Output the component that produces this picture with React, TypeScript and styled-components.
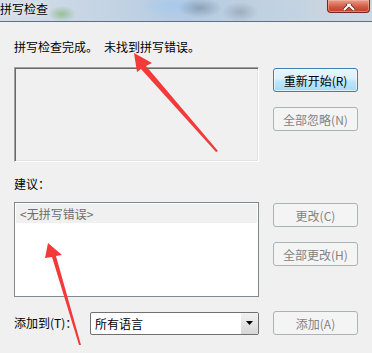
import styled, { createGlobalStyle } from 'styled-components'

const GlobalStyle = createGlobalStyle`
  html, body {
    margin: 0;
    padding: 0;
    background: #f0f0f0;
  }
  body {
    font-family: 'Noto Sans CJK SC', 'Microsoft YaHei', sans-serif;
    font-size: 12px;
    color: #000;
  }
`

const Window = styled.div`
  position: relative;
  width: 372px;
  height: 353px;
  overflow: hidden;
  background: #f0f0f0;
`

const TitleBar = styled.div`
  display: flex;
  justify-content: space-between;
  align-items: flex-start;
  height: 21px;
  border-bottom: 1px solid #5f7082;
  background:
    radial-gradient(ellipse 14px 8px at 62px 14px, rgba(110, 170, 90, 0.55), transparent),
    radial-gradient(ellipse 22px 10px at 200px 8px, rgba(90, 110, 130, 0.45), transparent),
    radial-gradient(ellipse 18px 10px at 240px 12px, rgba(110, 125, 140, 0.4), transparent),
    radial-gradient(ellipse 30px 12px at 170px 6px, rgba(160, 200, 240, 0.7), transparent),
    radial-gradient(ellipse 40px 14px at 280px 10px, rgba(190, 210, 230, 0.6), transparent),
    linear-gradient(90deg, #d5dee8 0%, #c3d3e3 30%, #b4cbe3 50%, #c4d2df 75%, #cdd8e2 100%);
`

const TitleText = styled.div`
  padding-top: 2px;
  font-size: 12px;
  line-height: 14px;
  color: #000;
  text-shadow: 0 0 6px rgba(255, 255, 255, 0.9);
`

const CloseButton = styled.div`
  display: flex;
  align-items: flex-end;
  justify-content: center;
  width: 41px;
  height: 12px;
  margin-right: 2px;
  border: 1px solid #6e2a20;
  border-top: none;
  border-radius: 0 0 4px 4px;
  background: linear-gradient(#e8a08f, #d0553f 60%, #c0402a);
  box-shadow: inset 0 0 0 1px rgba(255, 190, 170, 0.5);
`

const Content = styled.div`
  padding: 17px 0 0 14px;
`

const Message = styled.div`
  display: flex;
  gap: 6px;
  line-height: 16px;
  height: 16px;
`

const Row = styled.div<{ $mt: number }>`
  display: flex;
  gap: 14px;
  margin-top: ${(p) => p.$mt}px;
`

const SunkenBox = styled.div`
  box-sizing: border-box;
  width: 245px;
  height: 95px;
  border-top: 1px solid #a0a0a0;
  border-left: 1px solid #a0a0a0;
  border-right: 1px solid #fff;
  border-bottom: 1px solid #fff;
  box-shadow: inset 1px 1px 0 #696969, inset -1px -1px 0 #e3e3e3;
  background: #f0f0f0;
`

const ListBox = styled.div`
  box-sizing: border-box;
  width: 245px;
  height: 95px;
  border: 1px solid #828790;
  background: #fff;
  padding: 1px;
`

const ListItem = styled.div`
  height: 19px;
  line-height: 19px;
  padding-left: 4px;
  background: #f0f0f0;
  color: #6d6d6d;
`

const ButtonColumn = styled.div`
  display: flex;
  flex-direction: column;
  gap: 15px;
  padding-top: 1px;
`

const Button = styled.div<{ $default?: boolean; $disabled?: boolean }>`
  box-sizing: border-box;
  display: flex;
  align-items: center;
  justify-content: center;
  width: 85px;
  height: 24px;
  border-radius: 3px;
  border: 1px solid ${(p) => (p.$default ? '#3c7fb1' : '#adb2b5')};
  background: ${(p) =>
    p.$default ? 'linear-gradient(#eaf6fd 0%, #d9f0fc 45%, #bee6fd 55%, #a7d9f5 100%)' : '#f4f4f4'};
  box-shadow: ${(p) => (p.$default ? 'inset 0 0 0 1px rgba(255,255,255,0.6)' : 'none')};
  color: ${(p) => (p.$disabled ? '#838383' : '#000')};
`

const Label = styled.div<{ $mt?: number }>`
  line-height: 16px;
  height: 16px;
  margin-top: ${(p) => p.$mt ?? 0}px;
`

const BottomRow = styled.div`
  display: flex;
  align-items: center;
  margin-top: 14px;
`

const BottomLabel = styled.div`
  width: 76px;
  line-height: 16px;
`

const Combo = styled.div`
  box-sizing: border-box;
  display: flex;
  width: 169px;
  height: 23px;
  border: 1px solid #707070;
  border-radius: 2px;
  background: #fff;
  margin-right: 14px;
`

const ComboText = styled.div`
  flex: 1;
  padding-left: 4px;
  line-height: 21px;
`

const ComboArrow = styled.div`
  display: flex;
  align-items: center;
  justify-content: center;
  width: 17px;
  background: linear-gradient(#f2f2f2, #e5e5e5 50%, #d6d6d6);
  border-radius: 0 1px 1px 0;
`

const Overlay = styled.svg`
  position: absolute;
  left: 0;
  top: 0;
  pointer-events: none;
`

export default function App() {
  return (
    <>
      <GlobalStyle />
      <Window>
        <TitleBar>
          <TitleText>拼写检查</TitleText>
          <CloseButton>
            <svg width="14" height="8" viewBox="0 0 14 8">
              <path d="M2 -4 L12 6 M12 -4 L2 6" stroke="#6b2a20" strokeWidth="3.6" />
              <path d="M2 -4 L12 6 M12 -4 L2 6" stroke="#fff" strokeWidth="2" />
            </svg>
          </CloseButton>
        </TitleBar>
        <Content>
          <Message>
            <span>拼写检查完成。</span>
            <span>未找到拼写错误。</span>
          </Message>
          <Row $mt={12}>
            <SunkenBox />
            <ButtonColumn>
              <Button $default>重新开始(R)</Button>
              <Button $disabled>全部忽略(N)</Button>
            </ButtonColumn>
          </Row>
          <Label $mt={14}>建议：</Label>
          <Row $mt={10}>
            <ListBox>
              <ListItem>&lt;无拼写错误&gt;</ListItem>
            </ListBox>
            <ButtonColumn>
              <Button $disabled>更改(C)</Button>
              <Button $disabled>全部更改(H)</Button>
            </ButtonColumn>
          </Row>
          <BottomRow>
            <BottomLabel>添加到(T)：</BottomLabel>
            <Combo>
              <ComboText>所有语言</ComboText>
              <ComboArrow>
                <svg width="7" height="4" viewBox="0 0 7 4">
                  <path d="M0 0 H7 L3.5 4 Z" fill="#000" />
                </svg>
              </ComboArrow>
            </Combo>
            <Button $disabled>添加(A)</Button>
          </BottomRow>
        </Content>
        {/* red annotation arrows drawn over the dialog */}
        <Overlay width="372" height="353" viewBox="0 0 372 353">
          <path d="M134 53 L152 63 L146 66 L218 151 L216 152 L141 69 L137 72 Z" fill="#f23a3a" />
          <path d="M48 243 L62 255 L56 256 L81 345 L79 345 L52 257 L45 258 Z" fill="#f23a3a" />
        </Overlay>
      </Window>
    </>
  )
}
